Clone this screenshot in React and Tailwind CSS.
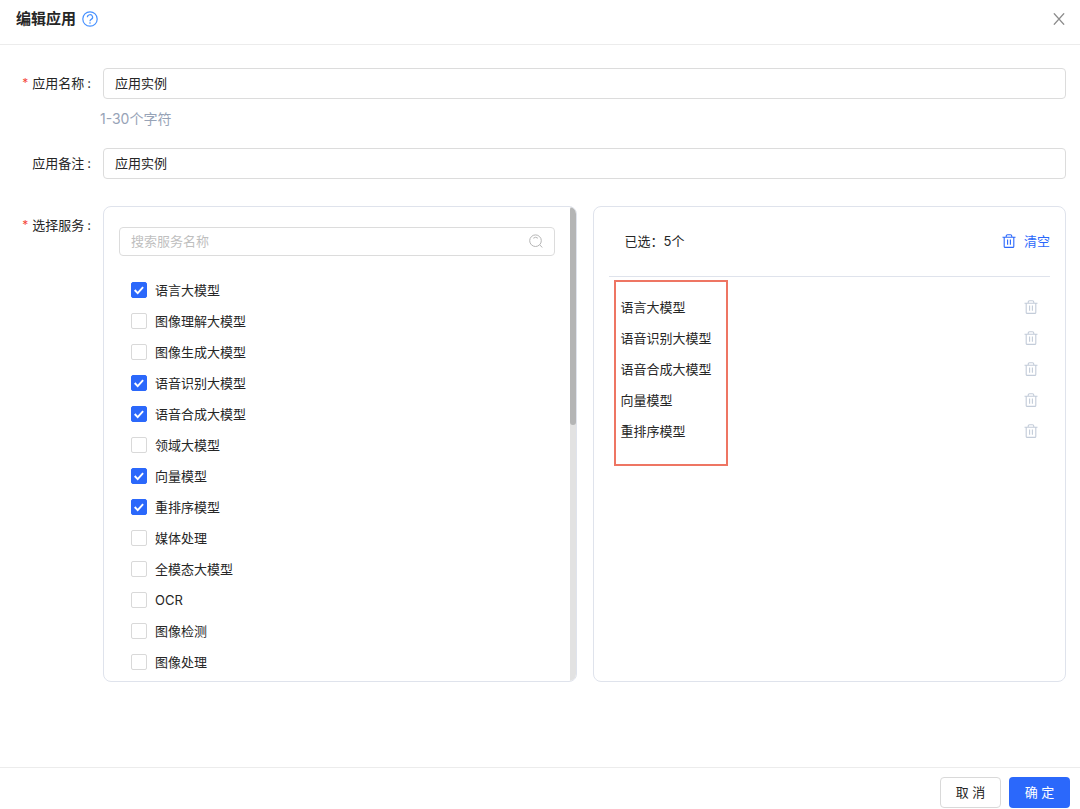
import React, { useState } from "react";

const services = [
  "语言大模型",
  "图像理解大模型",
  "图像生成大模型",
  "语音识别大模型",
  "语音合成大模型",
  "领域大模型",
  "向量模型",
  "重排序模型",
  "媒体处理",
  "全模态大模型",
  "OCR",
  "图像检测",
  "图像处理",
];

const HelpIcon = () => (
  <svg width="16" height="16" viewBox="0 0 16 16" fill="none" stroke="currentColor" strokeWidth="1.2">
    <circle cx="8" cy="8" r="7.2" />
    <path d="M5.4 6.3a2.6 2.5 0 1 1 3.8 2.1c-.8.4-1.2.8-1.2 1.8" />
    <circle cx="8" cy="12" r=".8" fill="currentColor" stroke="none" />
  </svg>
);

const CloseIcon = () => (
  <svg width="12" height="12" viewBox="0 0 12 12" fill="none" stroke="currentColor" strokeWidth="1.4">
    <path d="M.9.4l10.2 11.2M11.1.4L.9 11.6" />
  </svg>
);

const SearchIcon = () => (
  <svg width="14" height="14" viewBox="0 0 14 14" fill="none" stroke="currentColor" strokeWidth="1">
    <circle cx="6.5" cy="6.7" r="5.8" />
    <path d="M4.3 4.2a3.6 3.6 0 0 1 4.6 0M10.7 10.9l2.7 2.6" />
  </svg>
);

const TrashIcon = () => (
  <svg width="14" height="14" viewBox="0 0 14 14" fill="none" stroke="currentColor" strokeWidth="1.1">
    <path d="M.5 3.2h13M4.2 3v-.7q0-1.6 1.4-1.6h2.8q1.4 0 1.4 1.6V3M2.2 3.2v9.2q0 1 1 1h7.6q1 0 1-1V3.2M5.6 5.4v5.4M8.4 5.4v5.4" />
  </svg>
);

const Label = ({ children, htmlFor, required }) => (
  <label htmlFor={htmlFor} className="w-[103px] shrink-0 pr-3 pb-[2px] h-[31px] flex items-center justify-end">
    {required && <span className="text-[#f5483b] mr-1 text-xs">*</span>}
    {children}
    <span className="ml-[3px]">:</span>
  </label>
);

const App = () => {
  const [name, setName] = useState("应用实例");
  const [remark, setRemark] = useState("应用实例");
  const [keyword, setKeyword] = useState("");
  const [selected, setSelected] = useState(["语言大模型", "语音识别大模型", "语音合成大模型", "向量模型", "重排序模型"]);

  const toggle = (item) => {
    setSelected(services.filter((s) => (s === item ? !selected.includes(s) : selected.includes(s))));
  };

  const inputClass = "flex-1 min-w-0 h-[31px] px-[11px] pb-[2px] border border-[#dcdcdc] rounded-[4px] outline-none focus:border-[#2b68fb]";

  return (
    <div className="min-h-screen flex flex-col bg-white text-[#262626] text-[13px] leading-5 font-['Inter','Noto_Sans_CJK_SC',sans-serif]">
      <header className="h-[45px] pl-4 pr-[15px] pb-[6px] flex items-center justify-between border-b border-[#ececec]">
        <div className="flex items-center gap-[6px]">
          <h1 className="text-[15px] font-bold">编辑应用</h1>
          <button type="button" aria-label="帮助" className="text-[#4791ff]">
            <HelpIcon />
          </button>
        </div>
        <button type="button" aria-label="关闭" className="text-[#8c8c8c]">
          <CloseIcon />
        </button>
      </header>

      <form className="flex-1 flex flex-col" onSubmit={(e) => e.preventDefault()}>
        <main className="flex-1 pt-[23px] pr-[14px]">
          <div className="flex">
            <Label htmlFor="name" required>应用名称</Label>
            <input id="name" type="text" value={name} onChange={(e) => setName(e.target.value)} className={inputClass} />
          </div>
          <p className="ml-[100px] pt-[10px] h-[49px] text-sm text-[#97a3b7]">1-30个字符</p>

          <div className="flex">
            <Label htmlFor="remark">应用备注</Label>
            <input id="remark" type="text" value={remark} onChange={(e) => setRemark(e.target.value)} className={inputClass} />
          </div>

          <div className="flex mt-[27px]">
            <div className="pt-1">
              <Label htmlFor="search" required>选择服务</Label>
            </div>
            <div className="flex-1 grid grid-cols-2 gap-4">
              <section className="flex border border-[#dfe3ec] rounded-lg overflow-hidden">
                <div className="flex-1 pt-5 pb-1 px-[15px]">
                  <div className="flex items-center h-[29px] px-[11px] pb-[2px] border border-[#dcdcdc] rounded-[4px]">
                    <input
                      id="search"
                      type="text"
                      placeholder="搜索服务名称"
                      value={keyword}
                      onChange={(e) => setKeyword(e.target.value)}
                      className="flex-1 min-w-0 outline-none placeholder:text-[#bfbfbf]"
                    />
                    <span className="text-[#b5b5b5]"><SearchIcon /></span>
                  </div>
                  <ul className="mt-[18px] pl-3">
                    {services.filter((s) => s.includes(keyword)).map((item) => (
                      <li key={item} className="h-[31px] flex items-center">
                        <label className="flex items-center gap-2">
                          <span className="grid size-4">
                            <input
                              type="checkbox"
                              checked={selected.includes(item)}
                              onChange={() => toggle(item)}
                              className="peer appearance-none col-start-1 row-start-1 size-4 border border-[#d9d9d9] rounded-[2px] checked:bg-[#2b68fb] checked:border-[#2b68fb]"
                            />
                            <svg viewBox="0 0 16 16" fill="none" stroke="white" strokeWidth="1.9" className="hidden peer-checked:block pointer-events-none col-start-1 row-start-1 size-4">
                              <path d="M3.7 8l3 3.2 5.4-6" />
                            </svg>
                          </span>
                          {item}
                        </label>
                      </li>
                    ))}
                  </ul>
                </div>
                <div className="w-[6px] bg-[#e2e2e2]">
                  <div className="h-[46%] rounded-full bg-[#b4b5b5]" />
                </div>
              </section>

              <section className="px-[15px] border border-[#dfe3ec] rounded-lg">
                <div className="h-[70px] pl-4 pb-[2px] flex items-center justify-between border-b border-[#dfe3ec]">
                  <span>已选：{selected.length}个</span>
                  <button type="button" onClick={() => setSelected([])} className="flex items-center gap-2 text-[#2b68fb]">
                    <TrashIcon />
                    清空
                  </button>
                </div>
                <div className="relative pt-[15px] px-3">
                  <div className="absolute left-[5px] top-[3px] w-[114px] h-[186px] border-2 border-[#ee7563] pointer-events-none" />
                  <ul>
                    {selected.map((item) => (
                      <li key={item} className="h-[31px] pb-[2px] flex items-center justify-between">
                        <span>{item}</span>
                        <button type="button" aria-label={"删除" + item} onClick={() => toggle(item)} className="text-[#c3ccd9]">
                          <TrashIcon />
                        </button>
                      </li>
                    ))}
                  </ul>
                </div>
              </section>
            </div>
          </div>
        </main>

        <footer className="h-[42px] pt-[9px] pr-[10px] flex items-start justify-end gap-2 border-t border-[#ececec]">
          <button type="button" className="w-[61px] h-[31px] pb-[2px] border border-[#d9d9d9] rounded-[4px]">取 消</button>
          <button type="submit" className="w-[61px] h-[31px] pb-[2px] rounded-[4px] bg-[#2b68fb] text-white">确 定</button>
        </footer>
      </form>
    </div>
  );
};

export default App;
